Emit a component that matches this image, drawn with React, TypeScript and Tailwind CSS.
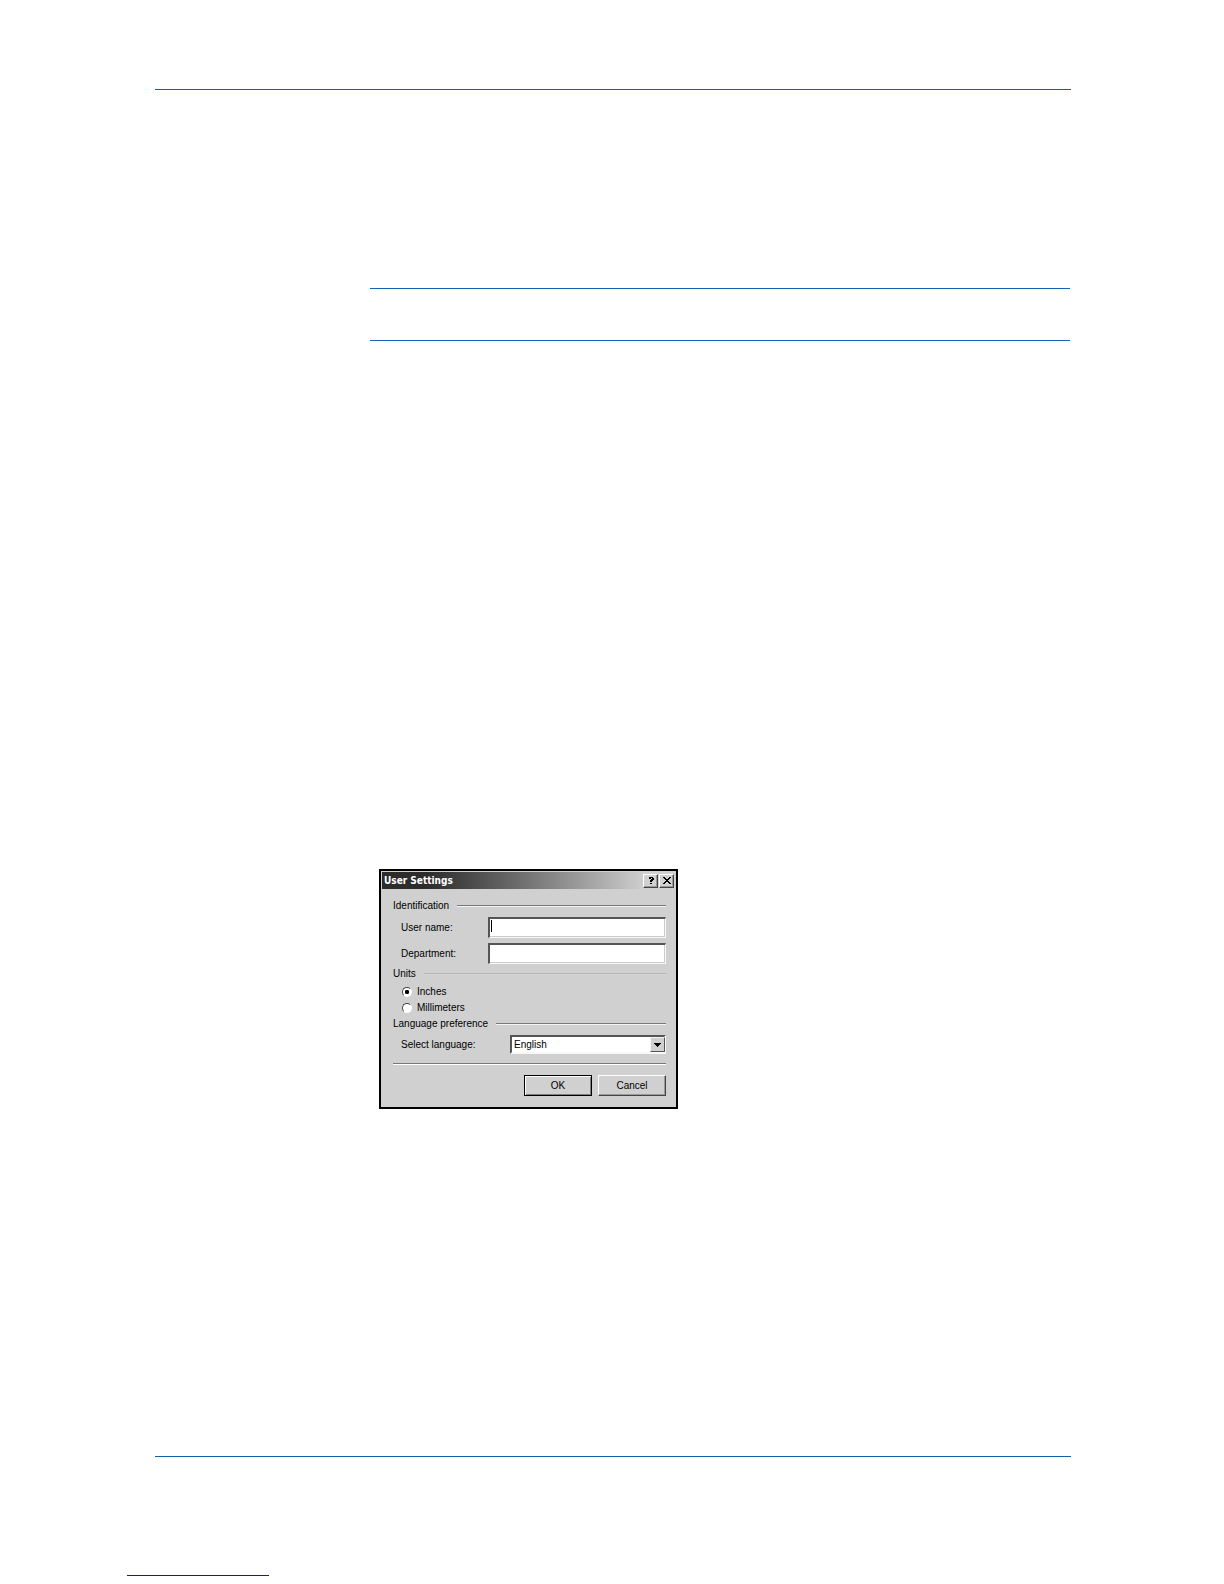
import { useState } from "react";
import type { ReactNode } from "react";

function App() {
  return (
    <div className="flex min-h-screen flex-col bg-white font-['Liberation_Sans',sans-serif] text-black">
      <main className="flex flex-col pt-[89px] pr-[153px] pl-[155px]">
        <hr className="border-t border-[#1660a3]" />
        <div className="mt-[198px] ml-[215px] mr-px h-[53px] border-y border-[#1660b3]" />
        <div className="mt-[528px] ml-[224px]">
          <UserSettings />
        </div>
        <hr className="mt-[347px] border-t border-[#1660a8]" />
      </main>
      <footer className="mt-[118px] pb-2 pl-[127px]">
        <hr className="w-[142px] border-t border-[#1a1a90]" />
      </footer>
    </div>
  );
}

function UserSettings() {
  const [userName, setUserName] = useState("");
  const [department, setDepartment] = useState("");
  const [units, setUnits] = useState("inches");
  const [language, setLanguage] = useState("English");

  return (
    <div
      role="dialog"
      aria-labelledby="dialog-title"
      className="w-[299px] border-2 border-black bg-[#d0d0d0] text-[10px] leading-3"
    >
      <div className="mx-px mt-px flex h-[17px] items-center bg-linear-to-r from-[#2c2c2c] from-15% via-[#808080] via-55% to-[#d0d0d0] to-90% pr-px pl-[2px]">
        <h1
          id="dialog-title"
          className="flex-1 font-['DejaVu_Sans_Condensed','DejaVu_Sans',sans-serif] text-[10px] font-bold text-white"
        >
          User Settings
        </h1>
        <div className="flex gap-px">
          <TitleButton label="Help">
            <path d="M3 1h4v1h1v2h-1v1h-1v1h-2v-2h1v-1h1v-1h-1v1h-2v-1zM4 7h2v1h-2z" />
          </TitleButton>
          <TitleButton label="Close">
            <path d="M1 1h2v1h1v1h2v-1h1v-1h2v1h-1v1h-1v1h-1v1h1v1h1v1h1v1h-2v-1h-1v-1h-2v1h-1v1h-2v-1h1v-1h1v-1h1v-1h-1v-1h-1v-1h-1z" />
          </TitleButton>
        </div>
      </div>

      <form
        className="flex flex-col pt-[11px] pr-[10px] pb-[11px] pl-3"
        onSubmit={(e) => e.preventDefault()}
      >
        <SectionTitle title="Identification" />
        <div className="mt-[5px] flex flex-col gap-[5px]">
          <TextField
            id="user-name"
            label="User name:"
            value={userName}
            onChange={setUserName}
            showCaret
          />
          <TextField
            id="department"
            label="Department:"
            value={department}
            onChange={setDepartment}
          />
        </div>

        <SectionTitle title="Units" className="mt-1" faint />
        <div className="mt-1 flex flex-col pl-[9px]">
          <UnitOption
            label="Inches"
            checked={units === "inches"}
            onSelect={() => setUnits("inches")}
          />
          <UnitOption
            label="Millimeters"
            checked={units === "millimeters"}
            onSelect={() => setUnits("millimeters")}
          />
        </div>

        <SectionTitle title="Language preference" className="mt-[2px]" />
        <div className="mt-[5px] flex items-center justify-between pl-2">
          <label htmlFor="language">Select language:</label>
          <div className="relative w-[156px]">
            <select
              id="language"
              value={language}
              onChange={(e) => setLanguage(e.target.value)}
              className="block h-[19px] w-full appearance-none border-2 border-t-[#555] border-r-[#f8f8f8] border-b-[#f8f8f8] border-l-[#555] bg-white pt-px pl-[2px] outline-none"
            >
              <option>English</option>
            </select>
            <span className="pointer-events-none absolute top-[2px] right-px flex h-[15px] w-[15px] items-center justify-center border border-t-[#f4f4f4] border-r-[#555] border-b-[#555] border-l-[#f4f4f4] bg-[#d0d0d0]">
              <svg width="7" height="4" viewBox="0 0 7 4" shapeRendering="crispEdges">
                <path d="M0 0h7v1h-1v1h-1v1h-1v1h-1v-1h-1v-1h-1v-1h-1z" />
              </svg>
            </span>
          </div>
        </div>

        <div className="mt-[9px] h-[2px] border-t border-[#777] bg-white" />
        <div className="mt-[10px] flex justify-end gap-[6px]">
          <button
            type="submit"
            className="h-[21px] w-[68px] border border-black bg-[#d0d0d0] shadow-[inset_1px_1px_0_#fff,inset_-1px_-1px_0_#808080]"
          >
            OK
          </button>
          <button
            type="button"
            className="h-[21px] w-[68px] border border-t-white border-r-[#444] border-b-[#444] border-l-white bg-[#d0d0d0] shadow-[inset_-1px_-1px_0_#999]"
          >
            Cancel
          </button>
        </div>
      </form>
    </div>
  );
}

interface TitleButtonProps {
  label: string;
  children: ReactNode;
}

const TitleButton = ({ label, children }: TitleButtonProps) => (
  <button
    type="button"
    aria-label={label}
    className="flex h-[14px] w-[15px] items-center justify-center border border-t-white border-r-[#444] border-b-[#444] border-l-white bg-[#d0d0d0] shadow-[inset_-1px_-1px_0_#999]"
  >
    <svg width="10" height="9" viewBox="0 0 10 9" shapeRendering="crispEdges">
      {children}
    </svg>
  </button>
);

interface SectionTitleProps {
  title: string;
  className?: string;
  faint?: boolean;
}

const SectionTitle = ({ title, className = "", faint }: SectionTitleProps) => (
  <div className={`flex items-center gap-2 ${className}`}>
    <h2>{title}</h2>
    <div
      className={`h-[2px] flex-1 border-t ${
        faint ? "border-[#b4b4b4] bg-[#d8d8d8]" : "border-[#777] bg-[#f4f4f4]"
      }`}
    />
  </div>
);

interface TextFieldProps {
  id: string;
  label: string;
  value: string;
  onChange: (value: string) => void;
  showCaret?: boolean;
}

const TextField = ({ id, label, value, onChange, showCaret }: TextFieldProps) => (
  <div className="flex items-center justify-between pl-2">
    <label htmlFor={id}>{label}</label>
    <div className="relative w-[178px]">
      <input
        id={id}
        type="text"
        value={value}
        onChange={(e) => onChange(e.target.value)}
        className="block h-[21px] w-full border-t-2 border-r border-b border-l-2 border-t-[#555] border-r-[#f8f8f8] border-b-[#f8f8f8] border-l-[#555] bg-white px-[2px] shadow-[inset_-1px_-1px_0_#ccc] outline-none"
      />
      {showCaret && (
        <span className="pointer-events-none absolute top-[3px] left-[3px] h-3 w-px bg-black" />
      )}
    </div>
  </div>
);

interface UnitOptionProps {
  label: string;
  checked: boolean;
  onSelect: () => void;
}

const UnitOption = ({ label, checked, onSelect }: UnitOptionProps) => (
  <label className="flex h-4 items-center gap-[5px]">
    <input
      type="radio"
      name="units"
      checked={checked}
      onChange={onSelect}
      className="h-[10px] w-[10px] appearance-none rounded-full border border-t-[#444] border-r-white border-b-white border-l-[#444] bg-white checked:bg-radial checked:from-black checked:from-35% checked:to-white checked:to-40%"
    />
    {label}
  </label>
);

export default App;
